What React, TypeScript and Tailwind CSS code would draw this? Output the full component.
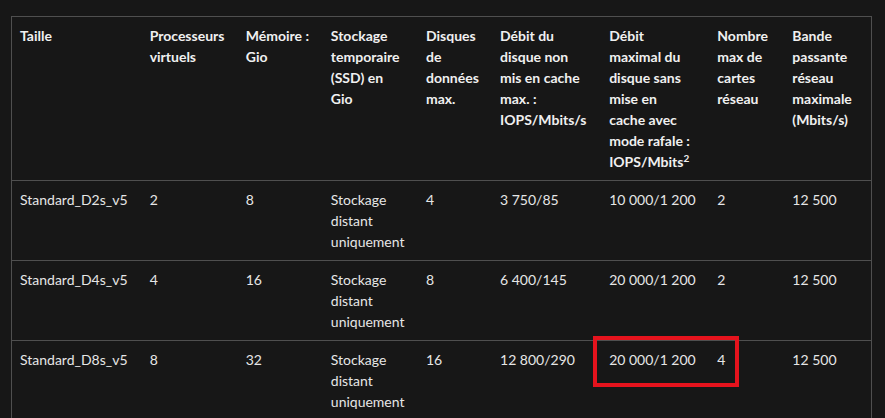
import React from 'react'

interface Row {
  size: string
  vcpu: string
  mem: string
  temp: string[]
  disks: string
  uncached: string
  burst: string
  nics: string
  bw: string
}

const rows: Row[] = [
  { size: 'Standard_D2s_v5', vcpu: '2', mem: '8', temp: ['Stockage', 'distant', 'uniquement'], disks: '4', uncached: '3 750/85', burst: '10 000/1 200', nics: '2', bw: '12 500' },
  { size: 'Standard_D4s_v5', vcpu: '4', mem: '16', temp: ['Stockage', 'distant', 'uniquement'], disks: '8', uncached: '6 400/145', burst: '20 000/1 200', nics: '2', bw: '12 500' },
  { size: 'Standard_D8s_v5', vcpu: '8', mem: '32', temp: ['Stockage', 'distant', 'uniquement'], disks: '16', uncached: '12 800/290', burst: '20 000/1 200', nics: '4', bw: '12 500' },
]

// lignes d'en-tête coupées à la main pour garder le même retour à la ligne
const headers: React.ReactNode[][] = [
  ['Taille'],
  ['Processeurs', 'virtuels'],
  ['Mémoire :', 'Gio'],
  ['Stockage', 'temporaire', '(SSD) en', 'Gio'],
  ['Disques', 'de', 'données', 'max.'],
  ['Débit du', 'disque non', 'mis en cache', 'max. :', 'IOPS/Mbits/s'],
  ['Débit', 'maximal du', 'disque sans', 'mise en', 'cache avec', 'mode rafale :', <>IOPS/Mbits<sup className="text-[10px] leading-none">2</sup></>],
  ['Nombre', 'max de', 'cartes', 'réseau'],
  ['Bande', 'passante', 'réseau', 'maximale', '(Mbits/s)'],
]

const widths = ['w-[130px]', 'w-[96px]', 'w-[85px]', 'w-[95px]', 'w-[74px]', 'w-[109px]', 'w-[108px]', 'w-[75px]', 'w-[87px]']

const lines = (parts: React.ReactNode[]) =>
  parts.map((p, i) => <div key={i} className="whitespace-nowrap">{p}</div>)

export default function App() {
  return (
    <div className="relative h-[418px] w-[885px] overflow-hidden bg-[#171717] pl-[11px] pt-4 font-['Lato',sans-serif] text-[14px] leading-[21px]">
      <table className="w-[861px] table-fixed border-collapse border border-[#4f4f4f]">
        <colgroup>
          {widths.map((w, i) => <col key={i} className={w} />)}
        </colgroup>
        <thead>
          <tr className="border-b border-[#4f4f4f]">
            {headers.map((h, i) => (
              <th key={i} className="px-2 py-2 text-left align-top font-bold text-[#f0f0f0]">{lines(h)}</th>
            ))}
          </tr>
        </thead>
        <tbody className="text-[#e6e6e6]">
          {rows.map((r) => (
            <tr key={r.size} className="border-b border-[#4f4f4f]">
              <td className="px-2 py-2 align-top">{r.size}</td>
              <td className="px-2 py-2 align-top">{r.vcpu}</td>
              <td className="px-2 py-2 align-top">{r.mem}</td>
              <td className="px-2 py-2 align-top">{lines(r.temp)}</td>
              <td className="px-2 py-2 align-top">{r.disks}</td>
              <td className="px-2 py-2 align-top">{r.uncached}</td>
              <td className="px-2 py-2 align-top">{r.burst}</td>
              <td className="px-2 py-2 align-top">{r.nics}</td>
              <td className="px-2 py-2 align-top">{r.bw}</td>
            </tr>
          ))}
        </tbody>
      </table>
      {/* encadré rouge de mise en évidence */}
      <div className="absolute left-[593px] top-[336px] h-[51px] w-[146px] border-4 border-[#e5131d]" />
    </div>
  )
}
